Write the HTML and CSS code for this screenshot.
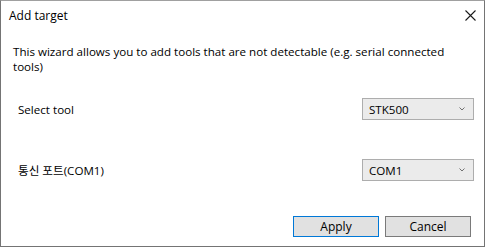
FILE: index.html
```html
<!DOCTYPE html>
<html>
<head>
<meta charset="utf-8">
<link rel="stylesheet" href="styles.css">
</head>
<body>
<div class="window">
  <div class="titlebar">
    <span class="title">Add target</span>
    <svg class="close" width="11" height="11" viewBox="0 0 11 11"><path d="M0.5 0.5 L10.5 10.5 M10.5 0.5 L0.5 10.5" stroke="#1a1a1a" stroke-width="1.1" fill="none"/></svg>
  </div>
  <div class="content">
    <p class="desc">This wizard allows you to add tools that are not detectable (e.g. serial connected tools)</p>
    <div class="row first">
      <span class="label">Select tool</span>
      <div class="select"><span>STK500</span><svg width="6" height="4" viewBox="0 0 6 4"><path d="M0.5 0.5 L3 3 L5.5 0.5" stroke="#707070" stroke-width="1" fill="none"/></svg></div>
    </div>
    <div class="row second">
      <span class="label">통신 포트(COM1)</span>
      <div class="select"><span>COM1</span><svg width="6" height="4" viewBox="0 0 6 4"><path d="M0.5 0.5 L3 3 L5.5 0.5" stroke="#707070" stroke-width="1" fill="none"/></svg></div>
    </div>
    <div class="buttons">
      <div class="btn default">Apply</div>
      <div class="btn">Cancel</div>
    </div>
  </div>
</div>
</body>
</html>
```
FILE: styles.css
```css
* { box-sizing: border-box; }
html, body { margin: 0; padding: 0; background: #fff; }
body {
  font-family: "Open Sans", "Noto Sans CJK KR", sans-serif;
  font-size: 11.6px;
  color: #000;
}
.window {
  width: 485px;
  height: 247px;
  border: 1px solid #747474;
  border-top-color: #a0a0a0;
  background: #fff;
  display: flex;
  flex-direction: column;
}
.titlebar {
  height: 29px;
  display: flex;
  align-items: center;
  justify-content: space-between;
  padding-left: 8px;
  padding-right: 8px;
}
.title { font-size: 12px; }
.content {
  padding: 0 10px 0 12px;
  display: flex;
  flex-direction: column;
}
.desc {
  margin: 14px 0 0 0;
  line-height: 15px;
  max-width: 445px;
}
.row {
  display: flex;
  align-items: center;
  justify-content: space-between;
}
.row.first { margin-top: 24px; }
.row.second { margin-top: 39px; }
.label { padding-left: 5px; }
.select {
  width: 112px;
  height: 22px;
  border: 1px solid #adadad;
  background: #ebebeb;
  display: flex;
  align-items: center;
  justify-content: space-between;
  padding: 0 8px 0 6px;
}
.buttons {
  margin-top: 35px;
  display: flex;
  justify-content: flex-end;
  gap: 6px;
  padding-right: 3px;
}
.btn {
  width: 86px;
  height: 21px;
  border: 1px solid #7a7a7a;
  background: #e1e1e1;
  display: flex;
  align-items: center;
  justify-content: center;
  font-size: 12px;
}
.btn.default { border-color: #0078d7; }
```
